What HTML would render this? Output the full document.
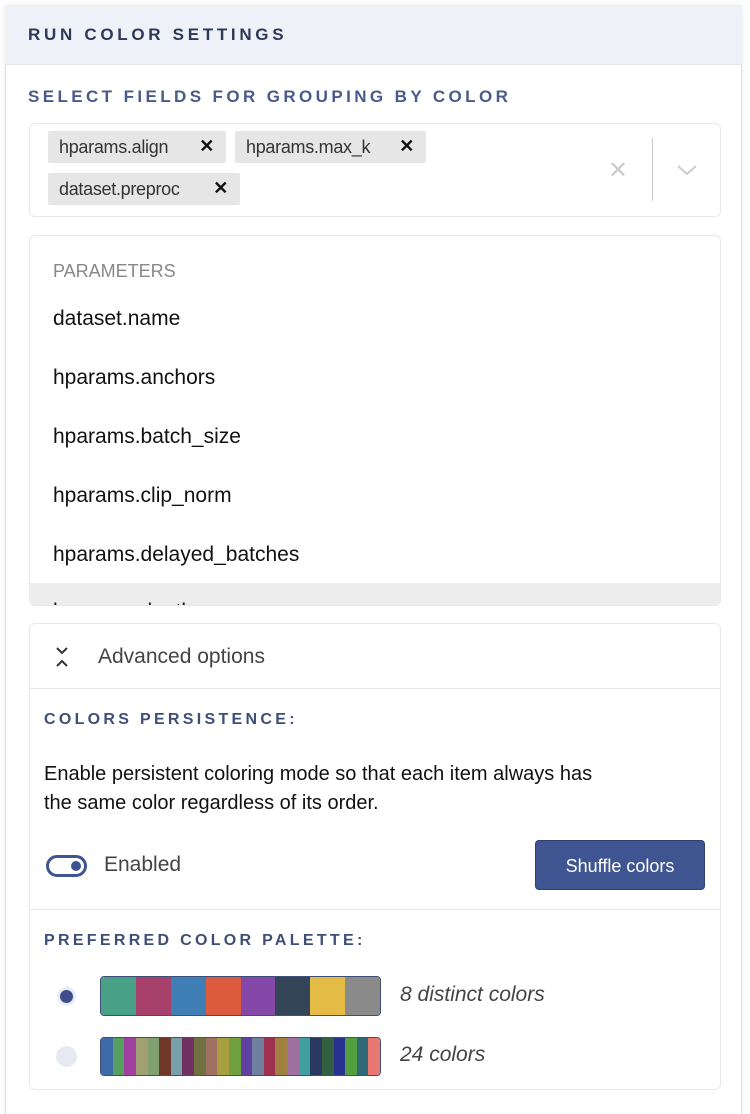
<!DOCTYPE html>
<html><head><style>
*{box-sizing:border-box;margin:0;padding:0}
body{width:750px;height:1114px;background:#fff;font-family:"Liberation Sans",sans-serif;position:relative;overflow:hidden;color:#222}
.a{position:absolute}
.panel{left:5px;top:5px;width:737px;height:1109px;background:#fff;border-left:1px solid #e3e3e3;border-right:1px solid #e3e3e3;box-shadow:0 0 6px rgba(0,0,0,.08)}
.hdr{left:5px;top:5px;width:737px;height:60px;background:#eef1f7;border-bottom:1px solid #e2e6ee}
.cap{font-weight:bold;letter-spacing:3.2px}
.box{border:1px solid #e6e8ec;border-radius:6px;background:#fff}
.chip{background:#e6e6e6;border-radius:2px;height:32px;font-size:18px;color:#333;padding:6px 0 0 11px;letter-spacing:-.3px}
.chip b{position:absolute;right:12px;top:5px;font-size:18px;color:#111}
.item{left:53px;font-size:21px;color:#111}
</style></head><body>
<div class="a panel"></div>
<div class="a hdr"></div>
<div class="a cap" style="left:28px;top:25px;font-size:17px;color:#2c3a57;letter-spacing:3.7px">RUN COLOR SETTINGS</div>
<div class="a cap" style="left:28px;top:87px;font-size:17px;color:#4a5a8a;letter-spacing:3.4px">SELECT FIELDS FOR GROUPING BY COLOR</div>
<div class="a box" style="left:29px;top:123px;width:692px;height:94px"></div>
<div class="a chip" style="left:48px;top:131px;width:178px">hparams.align<b>✕</b></div>
<div class="a chip" style="left:235px;top:131px;width:191px">hparams.max_k<b>✕</b></div>
<div class="a chip" style="left:48px;top:173px;width:192px">dataset.preproc<b>✕</b></div>
<div class="a" style="left:608px;top:156px;font-size:24px;color:#ccc">✕</div>
<div class="a" style="left:652px;top:138px;width:1px;height:63px;background:#ccc"></div>
<svg class="a" style="left:676px;top:163px" width="22" height="14"><path d="M2 3l9 8 9-8" fill="none" stroke="#ccc" stroke-width="2"/></svg>
<div class="a box" style="left:29px;top:235px;width:692px;height:371px;overflow:hidden">
<div class="a" style="left:0;top:347px;width:692px;height:24px;background:#ededed"></div>
<div class="a" style="left:23px;top:364px;font-size:21px;color:#111">hparams.depth</div>
</div>
<div class="a" style="left:53px;top:261px;font-size:18px;color:#888">PARAMETERS</div>
<div class="a item" style="top:307px">dataset.name</div>
<div class="a item" style="top:366px">hparams.anchors</div>
<div class="a item" style="top:425px">hparams.batch_size</div>
<div class="a item" style="top:484px">hparams.clip_norm</div>
<div class="a item" style="top:543px">hparams.delayed_batches</div>
<div class="a box" style="left:29px;top:623px;width:692px;height:467px"></div>
<div class="a" style="left:29px;top:688px;width:692px;height:1px;background:#e6e8ec"></div>
<svg class="a" style="left:55px;top:645px" width="14" height="24"><path d="M2 3l5 5 5-5M2 21l5-5 5 5" fill="none" stroke="#333" stroke-width="2"/></svg>
<div class="a" style="left:98px;top:645px;font-size:21px;color:#444">Advanced options</div>
<div class="a cap" style="left:44px;top:711px;font-size:16px;color:#3f4e78;letter-spacing:3.3px">COLORS PERSISTENCE:</div>
<div class="a" style="left:44px;top:760px;font-size:20px;line-height:29px;color:#111;width:570px">Enable persistent coloring mode so that each item always has the same color regardless of its order.</div>
<div class="a" style="left:46px;top:855px;width:41px;height:22px;border:3px solid #3f5592;border-radius:11px"><div style="position:absolute;right:3px;top:3px;width:10px;height:10px;border-radius:50%;background:#3f5592"></div></div>
<div class="a" style="left:104px;top:853px;font-size:21px;color:#444">Enabled</div>
<div class="a" style="left:535px;top:840px;width:170px;height:50px;background:#3f5592;border-radius:4px;color:#fff;font-size:18px;text-align:center;line-height:50px;border:1px solid #2e3f70">Shuffle colors</div>
<div class="a" style="left:29px;top:909px;width:692px;height:1px;background:#e6e8ec"></div>
<div class="a cap" style="left:44px;top:932px;font-size:16px;color:#3f4e78;letter-spacing:3.3px">PREFERRED COLOR PALETTE:</div>
<div class="a" style="left:57px;top:987px;width:19px;height:19px;border-radius:50%;background:#e8ecf6"></div>
<div class="a" style="left:60px;top:990px;width:13px;height:13px;border-radius:50%;background:#3f4e8a"></div>
<div class="a" style="left:100px;top:976px;width:281px;height:40px;border:1.5px solid #3f4e78;border-radius:4px;overflow:hidden;display:flex">
<div style="flex:1;background:#48a086"></div><div style="flex:1;background:#a8406c"></div><div style="flex:1;background:#3f7fb5"></div><div style="flex:1;background:#dc5a3e"></div><div style="flex:1;background:#8648a8"></div><div style="flex:1;background:#344558"></div><div style="flex:1;background:#e3bb45"></div><div style="flex:1;background:#8a8a8a"></div></div>
<div class="a" style="left:400px;top:983px;font-size:21px;font-style:italic;color:#444">8 distinct colors</div>
<div class="a" style="left:56px;top:1046px;width:21px;height:21px;border-radius:50%;background:#e6e9f2"></div>
<div class="a" style="left:100px;top:1037px;width:281px;height:39px;border:1.5px solid #3f4e78;border-radius:4px;overflow:hidden;display:flex">
<div style="flex:1;background:#3d6aa8"></div><div style="flex:1;background:#55a060"></div><div style="flex:1;background:#a040a0"></div><div style="flex:1;background:#a0a070"></div><div style="flex:1;background:#80a070"></div><div style="flex:1;background:#703828"></div><div style="flex:1;background:#78a0a8"></div><div style="flex:1;background:#703060"></div><div style="flex:1;background:#707040"></div><div style="flex:1;background:#a07060"></div><div style="flex:1;background:#a8a040"></div><div style="flex:1;background:#70a040"></div><div style="flex:1;background:#6040a0"></div><div style="flex:1;background:#7080a0"></div><div style="flex:1;background:#a03050"></div><div style="flex:1;background:#a08040"></div><div style="flex:1;background:#a070a0"></div><div style="flex:1;background:#40a0a0"></div><div style="flex:1;background:#283860"></div><div style="flex:1;background:#306040"></div><div style="flex:1;background:#283090"></div><div style="flex:1;background:#50a040"></div><div style="flex:1;background:#306878"></div><div style="flex:1;background:#e87870"></div></div>
<div class="a" style="left:400px;top:1043px;font-size:21px;font-style:italic;color:#444">24 colors</div>
</body></html>
